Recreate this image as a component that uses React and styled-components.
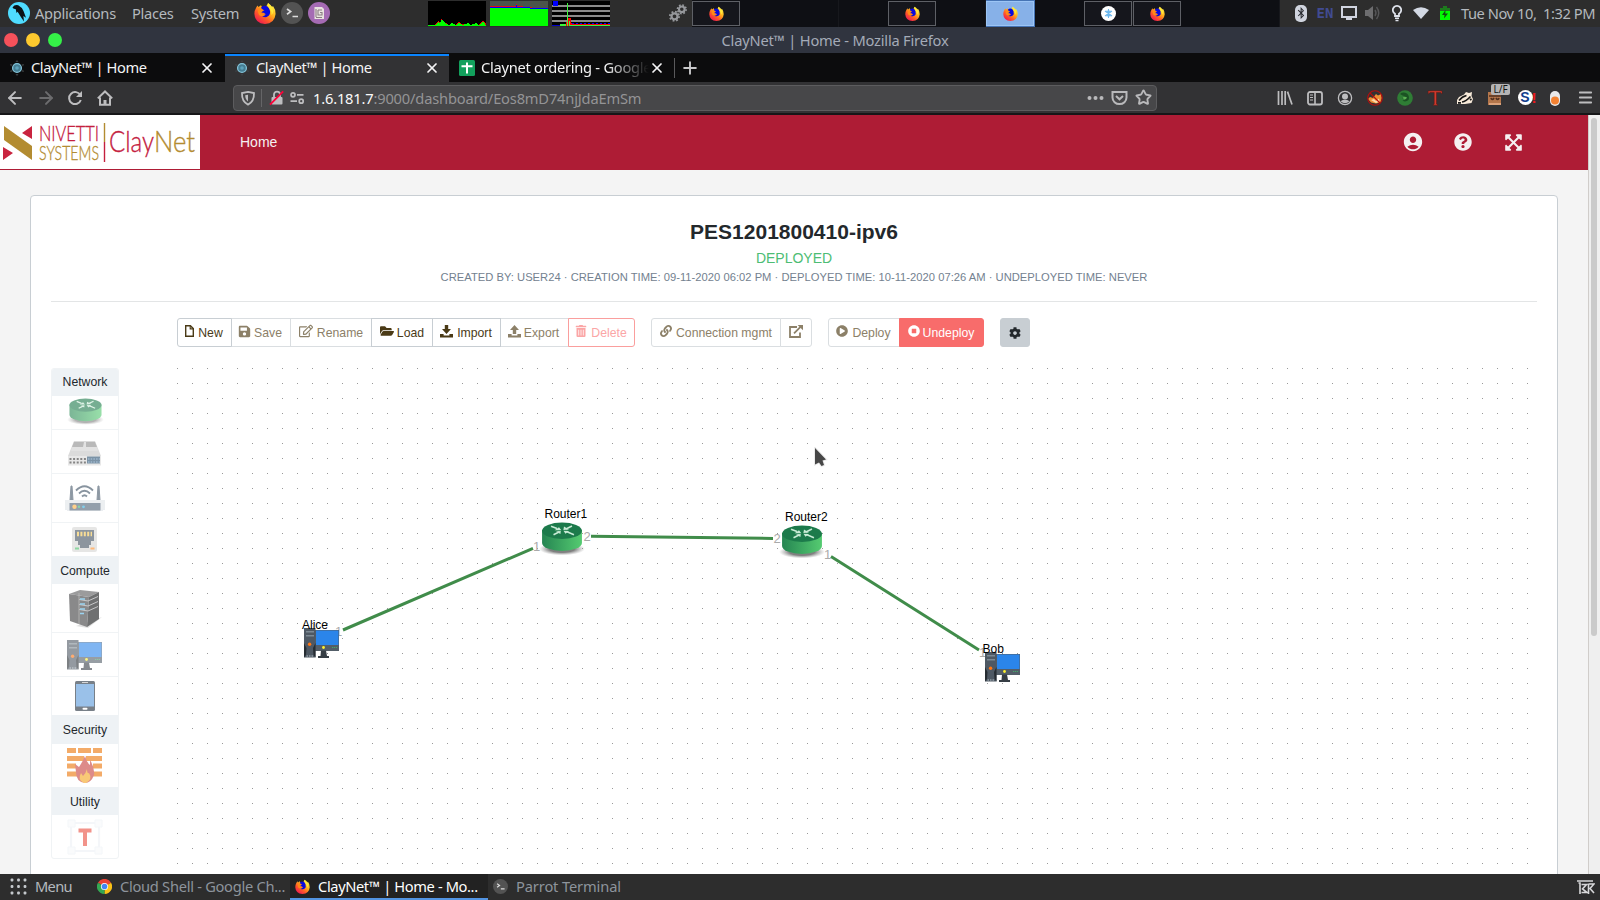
import React from "react";
import styled, { createGlobalStyle, css } from "styled-components";
import {
  FaSave, FaRegEdit, FaFolderOpen, FaLink, FaPlayCircle, FaStopCircle,
  FaCog, FaQuestionCircle, FaExpandArrowsAlt, FaBluetoothB, FaTrashAlt,
} from "react-icons/fa";
import { MdAccountCircle } from "react-icons/md";
import { ArrowLeft, ArrowRight, Star, X, Plus, Menu as MenuIcon } from "lucide-react";

const Global = createGlobalStyle`
  * { box-sizing: border-box; }
  html, body { margin: 0; height: 900px; overflow: hidden; }
  body { font-family: "Liberation Sans", Arial, sans-serif; }
  svg { display: block; flex: none; }
`;

const Desktop = styled.div`
  width: 1600px; height: 900px; display: flex; flex-direction: column; overflow: hidden;
  background: #2d2d2d;
`;
const uiFont = css`
  font-family: "Noto Sans", sans-serif; font-size: 14.67px; letter-spacing: -0.28px; white-space: pre;
`;

/* ---------- desktop panel ---------- */
const Panel = styled.div`
  ${uiFont} height: 27px; flex: none; display: flex; align-items: center; color: #b4b9be; background: #2d2d2d;
`;
const Cell = styled.div`
  width: ${(p) => p.$w}px; height: 100%; flex: none; display: flex; align-items: center;
  justify-content: ${(p) => (p.$center ? "center" : "flex-start")};
  padding: 0 0 1px ${(p) => p.$pad || 0}px;
`;
const Graphs = styled.div`display: flex; gap: 4px; width: 241px;`;
const Workspaces = styled.div`display: flex; width: 588px; height: 27px; background: #0e0f14;`;
const WorkCell = styled.div`
  width: 49px; height: 27px; padding: 1px 1px 1px 0; border-right: ${(p) => (p.$edge ? "1px solid #17181d" : "0")};
  background: ${(p) => (p.$active ? "#4674b5" : "transparent")};
`;
const WorkWindow = styled.div`
  width: 48px; height: 25px; display: flex; align-items: center; justify-content: center; padding-bottom: 1px;
  border: 1px solid ${(p) => (p.$active ? "#9cc5f5" : "#5e6066")};
  background: ${(p) => (p.$active ? "#87b1e8" : "#15161c")};
`;
const Lang = styled.span`
  font-family: "DejaVu Sans Mono", monospace; font-size: 14px; font-weight: bold; color: #414b92; letter-spacing: 0;
`;
const Clock = styled.span`letter-spacing: -0.44px; padding: 0 0 2px 4px;`;

/* ---------- window frame ---------- */
const TitleBar = styled.div`
  ${uiFont} height: 26px; flex: none; display: grid; grid-template-columns: 70px 1fr; align-items: center;
  background: #30343f; color: #a4abb8; letter-spacing: -0.2px;
`;
const Lights = styled.div`display: flex; gap: 8px; padding-left: 4px;`;
const Light = styled.i`width: 14px; height: 14px; border-radius: 50%; background: ${(p) => p.$c};`;
const TitleText = styled.div`text-align: center;`;

const TabStrip = styled.div`
  ${uiFont} height: 29px; flex: none; display: flex; background: #0c0c0d; color: #f4f4f5; letter-spacing: -0.44px;
`;
const Tab = styled.div`
  width: ${(p) => p.$w}px; height: 29px; display: flex; align-items: center;
  padding: 1px ${(p) => p.$right || 9}px 0 ${(p) => p.$left || 9}px;
  background: ${(p) => (p.$active ? "#323234" : "transparent")};
  box-shadow: ${(p) => (p.$active ? "inset 0 1px 0 #0c0c0d, inset 0 3px 0 #0a84ff" : "none")};
`;
const TabLabel = styled.span`
  flex: 1; margin-left: 6px; overflow: hidden; white-space: nowrap; padding-bottom: 2px;
  ${(p) => p.$fade && css`letter-spacing: -0.26px; mask-image: linear-gradient(90deg, #000 75%, transparent 100%);`}
`;
const NewTab = styled.div`
  display: flex; align-items: center; padding-left: 5px; margin: 5px 0 4px; border-left: 1px solid #5a5a5c; color: #c8c8ca;
`;

const NavBar = styled.div`
  height: 33px; flex: none; display: flex; align-items: center; background: #323234; color: #bdbdbf;
  border-bottom: 2px solid #161618;
`;
const NavButtons = styled.div`
  display: flex; align-items: center; gap: 11px; width: 233px; padding-left: 5px;
  svg:last-child { margin-left: 3px; }
`;
const UrlBar = styled.div`
  ${uiFont} width: 924px; height: 26px; display: flex; align-items: center; background: #474749; border: 1px solid #5c5c5e;
  border-radius: 4px; padding: 0 4px 0 6px; color: #fafafa;
`;
const UrlDivider = styled.i`width: 1px; height: 18px; background: #656567; margin: 0 7px 0 5px;`;
const UrlText = styled.span`
  flex: 1; margin-left: 8px; letter-spacing: -0.18px; span { color: #949496; }
`;
const UrlActions = styled.div`display: flex; gap: 7px; align-items: center; color: #b9b9bb;`;
const Extensions = styled.div`display: flex; margin-left: 113px;`;
const Extension = styled.div`
  width: 30px; height: 28px; display: flex; align-items: center; justify-content: center; position: relative;
`;
const ExtBadge = styled.span`
  position: absolute; left: 11px; top: 0; height: 11px; width: 19px; border-radius: 2px; text-align: center;
  font: 10px/11px "Noto Sans", sans-serif; background: #b5b5b5; color: #161616;
`;

/* ---------- web page ---------- */
const Viewport = styled.div`height: 759px; flex: none; display: flex; overflow: hidden; background: #f4f4f4;`;
const Page = styled.div`width: 1588px; display: flex; flex-direction: column; flex: none;`;
const Scrollbar = styled.div`width: 12px; border-left: 1px solid #d0cdca; background: #efefef; padding: 3px 3px 0 2px;`;
const Thumb = styled.div`height: 518px; width: 6px; border-radius: 3px; background: #cacaca;`;
const AppBar = styled.header`
  height: 55px; flex: none; display: flex; align-items: center; background: #ae1c35; color: #f5f0f1;
`;
const Brand = styled.div`width: 200px; height: 55px; border-bottom: 1px solid #ae1c35; background: #fff;`;
const HomeLink = styled.a`font-size: 14px; margin-left: 40px; padding-bottom: 1px; flex: 1;`;
const AppActions = styled.div`
  display: grid; grid-template-columns: repeat(3, 50px); justify-items: center; align-items: center;
  margin-right: 50px; padding-bottom: 1px;
`;
const Card = styled.main`
  width: 1528px; height: 720px; margin: 25px 0 0 30px; border: 1px solid #c8ced3; border-radius: 4px;
  background: #fff; padding: 0 20px; flex: none;
`;
const Heading = styled.div`
  height: 106px; padding-top: 23px; display: flex; flex-direction: column; align-items: center;
  border-bottom: 1px solid #e3e5e6;
`;
const Title = styled.h4`margin: 0; font-size: 21px; line-height: 25px; color: #23282c;`;
const Status = styled.div`margin-top: 6px; font-size: 14px; line-height: 16px; color: #4dbd74;`;
const Meta = styled.div`margin-top: 5px; font-size: 11.2px; line-height: 13px; letter-spacing: 0.017px; color: #73818f;`;

const Toolbar = styled.div`display: flex; gap: 16px; margin: 16px 0 0 126px; height: 29px;`;
const Group = styled.div`
  display: flex;
  & > *:first-child { border-radius: 3px 0 0 3px; }
  & > *:last-child { border-radius: 0 3px 3px 0; }
  & > *:only-child { border-radius: 3px; }
`;
const tones = {
  plain: css`border-color: #c8ced3; color: #4a3a16; background: #fff; z-index: 1;`,
  muted: css`border-color: #dadee1; color: #8c8068; background: #fff;`,
  danger: css`border-color: #fa9e9d; color: #fba6a6; background: #fff; z-index: 1;`,
  stop: css`border-color: #f86c6b; color: #fff; background: #f86c6b; z-index: 1;`,
  gear: css`border-color: #c8ced3; color: #23282c; background: #c8ced3;`,
};
const ToolButton = styled.button`
  width: ${(p) => p.$w}px; height: 29px; display: flex; align-items: center; justify-content: center;
  gap: ${(p) => p.$gap ?? 4}px;
  border: 1px solid; padding: 0 ${(p) => p.$shift || 0}px 0 0; margin-left: -1px; position: relative; white-space: nowrap;
  font: 12.25px "Liberation Sans", Arial, sans-serif; ${(p) => tones[p.$tone]}
  &:first-child { margin-left: 0; }
  svg { margin-top: ${(p) => (p.$tone === "gear" ? 1 : -3)}px; }
`;

const Work = styled.div`display: flex; margin-top: 21px;`;
const Palette = styled.aside`
  width: 68px; height: 491px; margin-right: 58px; border: 1px solid #f0f3f5; border-radius: 3px; flex: none;
  display: flex; flex-direction: column; overflow: hidden;
`;
const PaletteHead = styled.div`
  height: ${(p) => p.$h}px; display: flex; align-items: center; justify-content: center; flex: none;
  padding: ${(p) => p.$down || 0}px 0 ${(p) => p.$up || 0}px;
  font-size: 12.25px; color: #23282c; background: #eef2f5;
`;
const PaletteItem = styled.div`
  height: ${(p) => p.$h}px; flex: none; display: flex; align-items: center; justify-content: center;
  border-bottom: ${(p) => (p.$line ? "1px solid #f0f3f5" : "0")};
  padding: ${(p) => p.$down || 0}px ${(p) => p.$left ?? 1}px ${(p) => p.$up || 0}px 0;
  svg { opacity: 0.6; }
`;
const Canvas = styled.section`
  position: relative; width: 1353px; height: 510px;
  background: conic-gradient(from 270deg at 1px 1px, #999 90deg, transparent 0) 0 0 / 15px 15px;
`;
const Links = styled.svg`position: absolute; left: 0; top: 0;`;
const Node = styled.div`position: absolute; left: ${(p) => p.$x}px; top: ${(p) => p.$y}px;`;
const NodeName = styled.span`
  position: absolute; left: ${(p) => p.$x}px; top: ${(p) => p.$y}px; font-size: 12px; line-height: 14px; color: #000;
`;
const Port = styled.span`
  position: absolute; left: ${(p) => p.$x}px; top: ${(p) => p.$y}px; font-size: 13px; line-height: 14px; color: #aaa;
`;

/* ---------- task bar ---------- */
const TaskBar = styled.div`${uiFont} height: 26px; flex: none; display: flex; background: #2d2d2d; color: #8d949c;`;
const Task = styled.div`
  width: ${(p) => p.$w}px; padding: 0 0 1px ${(p) => p.$pad}px; display: flex; align-items: center; gap: 8px;
  letter-spacing: ${(p) => p.$track ?? -0.28}px;
  color: ${(p) => (p.$active ? "#fff" : p.$menu ? "#b4b9be" : "#8d949c")};
  background: ${(p) => (p.$active ? "#222" : "transparent")};
  box-shadow: ${(p) => (p.$active ? "inset 0 -2px 0 #5294e2" : "none")};
`;
const TaskLabel = styled.span`padding-bottom: 2px;`;
const Push = styled.div`margin-left: auto; padding: 6px 5px 0 0;`;

/* ---------- drawings ---------- */
const Firefox = ({ size }) => (
  <svg width={size} height={size} viewBox="0 0 22 22">
    <defs>
      <linearGradient id="fx" x1="0.85" y1="0.05" x2="0.2" y2="0.9">
        <stop offset="0" stopColor="#fff44a" /><stop offset="0.4" stopColor="#ffb01c" />
        <stop offset="0.7" stopColor="#ff5a28" /><stop offset="1" stopColor="#f0204e" />
      </linearGradient>
    </defs>
    <path d="M2 6 L3.4 3.4 L4.4 5 L7 3.2 L8.5 6 L12 5 L14 1 Q17 3 18 5 L19 4 Q22 8 21.6 12 Q20.6 21.6 11 22 Q1 21.4 .4 12 Q.3 8.6 2 6Z" fill="url(#fx)" />
    <path d="M7 5.5 Q10 2.5 13.5 4.5 Q17 8 15.8 12 Q13.5 16.5 8.6 14.6 L7.4 12.8 Q10 13.6 11.6 12 L9.5 10.8 L7 10.4 Q8.5 9 10.5 8 L8 7.8Z" fill="#0a0adc" />
    <path d="M4.6 6.2 Q8 6 9.6 8.2 L7.2 10.4 Q8 13 12 12.2 Q9 15.8 5 13 Q3.3 9.6 4.6 6.2Z" fill="#ff8a16" />
    <path d="M14 1 Q13.2 4 15.5 6.5 Q18 9.5 17.5 13 Q20.5 10 18 5Z" fill="#ffe93a" />
  </svg>
);
const Parrot = () => (
  <svg width="22" height="22" viewBox="0 0 22 22">
    <circle cx="11" cy="11" r="11" fill="#4fdcff" />
    <path d="M4.5 5.5 Q6.5 2.3 10.2 3.3 Q14 5.3 15.5 9 L18 15.8 L15.4 14 L16 19.5 L13.2 15.5 L9.6 9.8 L8.5 11 L7.8 7.2 L5.4 6.4Z" fill="#0b1216" />
  </svg>
);
const Terminal = ({ size }) => (
  <svg width={size} height={size} viewBox="0 0 22 22">
    <circle cx="11" cy="11" r="11" fill="#535353" />
    <path d="M6 7 L9.6 9.6 L6 12.2 M11.5 14.5 H17" fill="none" stroke="#ddd" strokeWidth="1.7" />
  </svg>
);
const Notes = () => (
  <svg width="22" height="22" viewBox="0 0 22 22">
    <circle cx="11" cy="11" r="11" fill="#a56bb4" />
    <path d="M6.5 5H14L16 7V17H6.5Z" fill="#e9e3e0" />
    <path d="M8 7V15M10 8H14M10 8V13H14V10.5H12M8 15.5H14" stroke="#8b7d84" strokeWidth="1.1" fill="none" />
  </svg>
);
const Gears = () => (
  <svg width="18" height="18" viewBox="0 0 18 18" fill="none" stroke="#96989c">
    <circle cx="5.5" cy="12.3" r="3" strokeWidth="2.2" /><circle cx="5.5" cy="12.3" r="4.6" strokeWidth="1.8" strokeDasharray="1.8 1.81" />
    <circle cx="12.8" cy="5.3" r="2.8" strokeWidth="2.1" /><circle cx="12.8" cy="5.3" r="4.3" strokeWidth="1.7" strokeDasharray="1.7 1.67" />
  </svg>
);
const CpuGraph = () => (
  <svg width="58" height="25" viewBox="0 0 58 25" shapeRendering="crispEdges">
    <rect width="58" height="25" fill="#000" />
    <path d="M7 25V23L10 20 12 22 14 17 15 21 18 22 21 24 24 22 27 24 31 21 34 23 37 24 40 22 43 24 48 22 51 24 54 20 56 20 58 23V25Z" fill="#e00" />
    <path d="M0 25V24H7L10 21 12 22 14 18 16 21 19 23 21 24 24 22 28 24 31 22 35 24 40 22 43 24 48 22 51 24 54 21 57 22 58 25Z" fill="#0f0" />
  </svg>
);
const MemGraph = () => (
  <svg width="58" height="25" viewBox="0 0 58 25" shapeRendering="crispEdges">
    <rect width="58" height="25" fill="#4b544c" />
    <path d="M0 5H26V3H27V5L38 6H42V7H58V10H0Z" fill="#e01010" />
    <path d="M0 6H26V4H27V6H40V7H58V10H0Z" fill="#00f" />
    <path d="M0 7H24L40 7.5 48 8H58V25H0Z" fill="#0f0" />
  </svg>
);
const NetGraph = () => (
  <svg width="58" height="25" viewBox="0 0 58 25" shapeRendering="crispEdges">
    <rect width="58" height="25" fill="#000" />
    <path d="M0 5H58M0 10H58M0 15H58M0 20H58" stroke="#8b8b8b" strokeWidth="2" />
    <path d="M8 25V23H14L16 17H19V22L22 23H58V25Z" fill="#f00" />
    <path d="M20 22.5H58" stroke="#00f" strokeDasharray="2 2" />
    <path d="M8 25V23H14V25M15 25V2H16V25M17 25V20H18V24H58V25Z" fill="#3df53d" />
    <rect x="1" width="5" height="5" fill="#00f" /><rect y="24" width="8" height="1" fill="#00c" />
  </svg>
);
const Snow = () => (
  <svg width="15" height="15" viewBox="0 0 15 15">
    <circle cx="7.5" cy="7.5" r="7.5" fill="#fff" />
    <path d="M7.5 3V12M4 5L11 10M4 10L11 5M5.8 4.5L9.2 10.6M9.2 4.5L5.8 10.6" stroke="#6cb8ee" strokeWidth="1.1" />
  </svg>
);
const Tray = ({ kind }) => (
  <svg width="18" height="18" viewBox="0 0 18 18">
    {kind === "screen" && <><rect x="2" y="3" width="14" height="10" fill="none" stroke="#d0d4e0" strokeWidth="2" /><path d="M6 16H12V13H6Z" fill="#d0d4e0" /></>}
    {kind === "sound" && <><path d="M1 6H4L9 2V16L4 12H1Z" fill="#6d6d6f" /><path d="M11 6Q13 9 11 12M12.5 3Q17 9 12.5 15" fill="none" stroke="#565658" strokeWidth="1.4" /></>}
    {kind === "bulb" && <><path d="M7 12V9.8A4.2 4.2 0 1 1 11 9.8V12Z" fill="none" stroke="#dfe3ec" strokeWidth="1.8" /><path d="M7 14.2H11M7.5 16.6H10.5" stroke="#dfe3ec" strokeWidth="1.5" /></>}
    {kind === "wifi" && <path d="M1 6Q9 .5 17 6L9 15Z" fill="#d3d9e4" />}
    {kind === "power" && <><path d="M4 4H7V2H11V4H14V8H4Z" fill="#1d7a1d" /><rect x="4" y="7" width="10" height="9" fill="#0f0" /><path d="M9.5 6L6 11H8.5L8 14.5L12 9.5H9.3Z" fill="#134d13" /></>}
  </svg>
);
const Bluetooth = styled.div`
  width: 12px; height: 17px; border-radius: 5px; background: #d0d4de; color: #26282d;
  display: flex; align-items: center; justify-content: center;
`;
const Favicon = () => (
  <svg width="16" height="16" viewBox="0 0 16 16">
    <path d="M8 0L9.5 2H6.5ZM8 16L9.5 14H6.5ZM1 4L3.5 4.5 2 6.5ZM15 4L12.5 4.5 14 6.5ZM1 12L3.5 11.5 2 9.5ZM15 12L12.5 11.5 14 9.5Z" fill="#3d4042" />
    <circle cx="8" cy="8" r="4.4" fill="#457d92" stroke="#83c3d8" strokeWidth="1.3" /><circle cx="8" cy="8" r="1.8" fill="#5da3bb" />
  </svg>
);
const Sheets = () => (
  <svg width="16" height="16" viewBox="0 0 16 16">
    <rect width="16" height="16" rx="1.5" fill="#12a05c" /><path d="M2.5 6.2H13.5M8 2.5V13.5" stroke="#fff" strokeWidth="2" />
  </svg>
);
const Reload = () => (
  <svg width="16" height="16" viewBox="0 0 16 16" fill="none" stroke="currentColor" strokeWidth="2">
    <path d="M13.4 5.2A6 6 0 1 0 13.8 10" /><path d="M15 1V7H9Z" fill="currentColor" stroke="none" />
  </svg>
);
const House = () => (
  <svg width="16" height="16" viewBox="0 0 16 16" fill="none" stroke="currentColor" strokeWidth="2">
    <path d="M.8 8.4L8 1.5L15.2 8.4M3 7.5V14.8H13V7.5" /><path d="M8 14V10" strokeWidth="3" />
  </svg>
);
const Shield = () => (
  <svg width="16" height="16" viewBox="0 0 16 16">
    <path d="M8 1.8L14 3Q14.3 11.5 8 14.6Q1.7 11.5 2 3Z" fill="none" stroke="#bdbdbf" strokeWidth="1.8" />
    <path d="M8 4.8L5.2 5.3Q5.2 9.4 8 11.5Z" fill="#bdbdbf" />
  </svg>
);
const Lock = () => (
  <svg width="16" height="16" viewBox="0 0 16 16">
    <rect x="2.5" y="7" width="11" height="7.5" rx="1" fill="#bdbdbf" />
    <path d="M5 7V4.6A3 3 0 0 1 11 4.6V7" fill="none" stroke="#bdbdbf" strokeWidth="1.8" />
    <path d="M1 14.6L14.2 1.4" stroke="#ff0039" strokeWidth="1.8" />
  </svg>
);
const PermissionsIcon = styled.svg`margin-left: 4px;`;
const Permissions = () => (
  <PermissionsIcon width="16" height="16" viewBox="0 0 16 16" fill="none" stroke="#bdbdbf" strokeWidth="1.7">
    <circle cx="4" cy="4.8" r="2" /><path d="M8 4.8H14.5M1.5 11.2H8" /><circle cx="12.2" cy="11.2" r="2" />
  </PermissionsIcon>
);
const Pocket = () => (
  <svg width="17" height="16" viewBox="0 0 17 16" fill="none" stroke="currentColor" strokeWidth="2">
    <path d="M1.5 2H15.5V7.5A7 6.6 0 0 1 1.5 7.5Z" /><path d="M5 6L8.5 9.3L12 6" />
  </svg>
);
const Dots = () => (
  <svg width="17" height="16" viewBox="0 0 17 16" fill="currentColor">
    <circle cx="2.5" cy="8" r="2" /><circle cx="8.5" cy="8" r="2" /><circle cx="14.5" cy="8" r="2" />
  </svg>
);
const Ext = ({ kind }) => (
  <svg width="16" height="16" viewBox="0 0 16 16">
    {kind === "library" && <path d="M1.5 1V15M5 1V15M8.2 1V15M10.5 1.6L15 14.5" stroke="#bdbdbf" strokeWidth="1.7" />}
    {kind === "sidebar" && <g fill="none" stroke="#bdbdbf"><rect x="1" y="2" width="14" height="12.5" rx="2" strokeWidth="1.8" /><path d="M8 2V14" strokeWidth="1.6" /><path d="M3 5H6M3 7.5H6M3 10H6" /></g>}
    {kind === "account" && <><circle cx="8" cy="8" r="6.6" fill="none" stroke="#bdbdbf" strokeWidth="1.3" /><circle cx="8" cy="6.6" r="3" fill="#bdbdbf" /><path d="M3.5 11.2Q8 8.5 12.5 11.2Q8 15.5 3.5 11.2Z" fill="#bdbdbf" /></>}
    {kind === "fox" && <><path d="M1 9L3 7L6 8L9 4L11 5.5L14 4L14.8 8L13.5 12.5L9 13.5L4 12.5Z" fill="#ef8f35" /><path d="M4 10L7 9L9 11L12 8.5L12.5 11.5L9 13Z" fill="#fbdcae" /><circle cx="8" cy="8" r="7.3" fill="none" stroke="#b80d0d" strokeWidth="1.1" /><path d="M3 3L13 13" stroke="#b80d0d" strokeWidth="1.1" /></>}
    {kind === "green" && <><circle cx="8" cy="8" r="7.8" fill="#2f7d35" /><path d="M3 4Q6 1.5 10 3.5Q13 6.5 11.5 10Q8.5 12.6 5.5 10.6L7.8 9.8L5.2 8L8 6.2L5.6 5.6Z" fill="#1b5223" /><path d="M5.6 7.6Q8 6 10 7.5Q9 10 7 9.4Z" fill="#5aae52" /></>}
    {kind === "tee" && <path d="M1 1Q8 .3 15 1L15 4L13.5 2.5H9.5V14L11 15.2H6L7.2 14V2.5H3L1.4 4Z" fill="#d23a2c" stroke="#5a1712" strokeWidth=".5" />}
    {kind === "badger" && <><path d="M0 10L2 7L7 4.5L9 2L12 3L15 2L14.5 6L16 9L14.5 13L8 14L0 14Z" fill="#f7ead9" /><path d="M2 10.5Q5 6.5 9.5 5.5M5 12Q9 11.5 13.5 6.5M13 10L14.5 9M1 12.8H4" stroke="#171717" strokeWidth="1.7" fill="none" /></>}
    {kind === "box" && <><rect x="1" y="2" width="13" height="13" fill="#b4764b" /><path d="M2 6H14M4 8Q5 11 7 8M9 8Q11 11 12 8" stroke="#50311f" strokeWidth="1.7" fill="none" /><path d="M2 14H14" stroke="#dba27b" strokeWidth="2" /></>}
    {kind === "capsule" && <><rect x="3" y="1" width="10" height="15" rx="5" fill="#e9e9ea" /><circle cx="8" cy="10.5" r="4" fill="#f38131" /></>}
  </svg>
);
const SearchExt = styled.div`
  width: 15px; height: 15px; border-radius: 50%; background: #fff; text-align: center; color: #123e8c;
  font: 900 14px/15px "Liberation Sans", sans-serif; position: relative;
  &::after { content: "!"; position: absolute; right: -4px; top: 0; color: #f01818; font-size: 15px; }
`;

const NivettiLogo = () => (
  <svg width="200" height="54" viewBox="0 0 200 54">
    <path d="M4 11L32 31V45L4 25Z" fill="#b38c31" />
    <path d="M32 11V24L22 18ZM3 32V45L13 38Z" fill="#c9243f" />
    <g fontFamily="Lato, sans-serif" fontWeight="300" strokeWidth="0.35">
      <text x="39" y="26" fontSize="22" fill="#c4203e" stroke="#c4203e" textLength="60" lengthAdjust="spacingAndGlyphs">NIVETTI</text>
      <text x="39" y="44.5" fontSize="19.5" fill="#b38c31" stroke="#b38c31" textLength="60" lengthAdjust="spacingAndGlyphs">SYSTEMS</text>
      <text x="109" y="36.5" fontSize="29" fill="#c4203e" stroke="#c4203e" textLength="45" lengthAdjust="spacingAndGlyphs">Clay</text>
      <text x="154" y="36.5" fontSize="29" fill="#b38c31" stroke="#b38c31" textLength="41" lengthAdjust="spacingAndGlyphs">Net</text>
    </g>
    <path d="M104.5 8V27" stroke="#b38c31" strokeWidth="1.4" /><path d="M104.5 27V47" stroke="#c4203e" strokeWidth="1.4" />
  </svg>
);

const Router = ({ w }) => (
  <svg width={w} height={w * 0.78} viewBox="0 0 46 36">
    <defs>
      <linearGradient id="rt"><stop offset="0" stopColor="#258552" /><stop offset="1" stopColor="#55cb71" /></linearGradient>
      <radialGradient id="sh"><stop offset=".55" stopColor="#555" stopOpacity=".75" /><stop offset="1" stopColor="#888" stopOpacity="0" /></radialGradient>
    </defs>
    <ellipse cx="23" cy="27" rx="23" ry="6.5" fill="url(#sh)" />
    <path d="M3 8V21A20 8 0 0 0 43 21V8Z" fill="url(#rt)" />
    <ellipse cx="23" cy="8.8" rx="20" ry="8.2" fill="#1c7a4b" />
    <path d="M12 4.3L18 6.6M33 4L27 7M14.5 12.8L20.5 9.8M35 12.8L27.5 9.6" stroke="#c9ebd6" strokeWidth="1.6" />
    <path d="M22.4 8.2L15.6 8.2L20 5.2ZM24.4 8L25 4.6L30 7.6ZM21.8 9L21.4 12L17 9.6ZM24.5 8.8L30 9L26.5 11.8Z" fill="#c9ebd6" />
  </svg>
);
const Computer = ({ w }) => (
  <svg width={w} height={(w * 30) / 35} viewBox="0 0 35 30">
    <path d="M11 2H35V23H11Z" fill="#535e68" /><path d="M12 2.5H34.5V17H12Z" fill="#2b85ea" />
    <path d="M17 22.5H22L23 28H25V30H14V28H16.5Z" fill="#363e45" />
    <rect width="11.5" height="29.5" fill="#4e5863" />
    <path d="M2 3.8H10M2 7.8H10" stroke="#7c8994" strokeWidth="1.6" />
    <path d="M0 15L2.5 20L2 27L0 29.5ZM11.5 15L9 20L9.5 27L11.5 29.5Z" fill="#262c32" />
    <circle cx="5.6" cy="16.3" r="1.7" fill="#ff7614" /><path d="M2.5 28H9" stroke="#b2bdc5" strokeDasharray="1.5 1" />
    <circle cx="19.5" cy="19.5" r="1.4" fill="#fff22d" /><path d="M28 19.5H33" stroke="#46a56a" strokeDasharray="1.3 .7" />
  </svg>
);
const Switch = () => (
  <svg width="33" height="25" viewBox="0 0 33 25">
    <path d="M6 0H27L33 15V24H0V15Z" fill="#c4c4c4" /><path d="M6 1H27L30 10H3Z" fill="#cfcfcf" />
    <path d="M6 1H16L15 6H4ZM18 1H27L29 6H18Z" fill="#8c8c8c" /><rect y="15" width="33" height="9.5" fill="#dadada" />
    <path d="M1.5 18H18M1.5 21.5H18" stroke="#333" strokeWidth="2" strokeDasharray="2 1.6" />
    <rect x="19" y="15.5" width="13" height="7" fill="#264c6c" /><path d="M20 18H32M20 21H32" stroke="#7faad0" strokeDasharray="1.5 1.2" />
  </svg>
);
const Wifi = () => (
  <svg width="40" height="26" viewBox="0 0 40 26">
    <path d="M5 15L6 1H7L8 15ZM32 15L33 1H34L35 15Z" fill="#425466" stroke="#425466" />
    <path d="M11 5.5Q19.5-3 28 5.5M14 8.5Q19.5 3 25 8.5M17 11.5Q19.5 9 22 11.5" fill="none" stroke="#394d60" strokeWidth="1.8" />
    <path d="M0 15H40V25H38V26H2V25H0Z" fill="#dfe4e8" /><rect x="4.5" y="18" width="31" height="7.5" fill="#4c5f73" />
    <circle cx="9.5" cy="21.8" r="2.2" fill="#ffb13d" /><circle cx="14" cy="21.8" r="1.2" fill="#37bd72" /><circle cx="18.5" cy="21.8" r="1.4" fill="#2db0e2" />
  </svg>
);
const Ethernet = () => (
  <svg width="25" height="25" viewBox="0 0 25 25">
    <rect width="25" height="25" rx="2" fill="#d6d6d4" /><path d="M3 3H22V14H19V18H17V21H8V18H6V14H3Z" fill="#41505f" />
    <path d="M5 7H20" stroke="#f5c750" strokeWidth="4.5" strokeDasharray="2 1.4" />
    <path d="M3 21.5H7" stroke="#43be63" strokeWidth="2" /><path d="M18.5 21.5H22.5" stroke="#ff8a1f" strokeWidth="2" />
  </svg>
);
const Server = () => (
  <svg width="34" height="38" viewBox="0 0 34 38">
    <path d="M8 36L34 27L20 38Z" fill="#ccc" /><path d="M1 4L12 0L31 2L21 7Z" fill="#5a5a5c" /><path d="M1 4L21 7L19 37L2 31Z" fill="#3c3c3e" />
    <path d="M21 7L31 2V29L19 37Z" fill="#101214" />
    <path d="M11 9.5L20 11L30 6.5M11 14.5L20 16L30 11.5M11 19.5L20 21L30 16.5" stroke="#a3a3a6" strokeWidth="1" fill="none" />
    <path d="M12 9H17M12 14H17M12 19H17M12 23.5H16" stroke="#58b7e8" strokeWidth="1.6" /><path d="M11 3V34" stroke="#8a8a8a" strokeWidth=".8" />
  </svg>
);
const Phone = () => (
  <svg width="20" height="30" viewBox="0 0 20 30">
    <rect width="20" height="30" rx="1.5" fill="#202c3a" /><rect x="1" y="3" width="18" height="22.5" fill="#5898dc" />
    <path d="M7 1.5H13" stroke="#bbb" /><rect x="7.5" y="26.7" width="5" height="2" rx="1" fill="#fff" />
  </svg>
);
const Firewall = () => (
  <svg width="35" height="35" viewBox="0 0 35 35">
    <g fill="#ec7404"><path d="M0 0H9V5H0ZM11 0H24V5H11ZM26 0H35V5H26ZM0 8H17V13H0ZM19 8H35V13H19ZM0 15.5H9V20.5H0ZM26 15.5H35V20.5H26ZM0 23.5H12V28.5H0ZM25 23.5H35V28.5H25Z" /></g>
    <path d="M18 8Q20 15 23 17Q23 14 23 12Q28 20 27 27Q24 35 18 35Q9 34 9 24L8 16L12 19Q16 13 18 8Z" fill="#c83f3b" />
    <path d="M20 21Q20 26 22 25Q26 31 19 35H17Q10 32 14 25L16 28Q19 25 20 21Z" fill="#f4a51c" />
  </svg>
);
const TextTool = () => (
  <svg width="36" height="36" viewBox="0 0 36 36">
    <path d="M6 4H30M6 32H30M4 6V30M32 6V30" stroke="#edf1f6" strokeWidth="2.2" />
    <path d="M1 1H8V8H1ZM28 1H35V8H28ZM1 28H8V35H1ZM28 28H35V35H28Z" fill="#f7f9fb" stroke="#edf1f6" />
    <path d="M11.5 9.5H24.5V13.5H20V27H16V13.5H11.5Z" fill="#ea4b3d" />
  </svg>
);
const Page12 = () => (
  <svg width="9" height="12" viewBox="0 0 9 12" fill="none" stroke="currentColor" strokeWidth="1.4">
    <path d="M.7.7H5.4L8.3 3.6V11.3H.7Z" /><path d="M5.2.7V3.9H8.3" strokeWidth="1.1" />
  </svg>
);
const Transfer = ({ up }) => (
  <svg width="13" height="13" viewBox="0 0 13 13" fill="currentColor">
    <path d={up ? "M6.5 0L11 5H8.2V9H4.8V5H2Z" : "M4.8 0H8.2V4H11L6.5 9L2 4H4.8Z"} />
    <path d="M0 9H3.6V10.6H9.4V9H13V12.6H0Z" />
  </svg>
);
const External = () => (
  <svg width="14" height="13" viewBox="0 0 14 13" fill="none" stroke="currentColor" strokeWidth="1.8">
    <path d="M8 2H1V12H11V7.5" /><path d="M5 8.3L11.5 1.8" /><path d="M8.6 0H14V5.3Z" fill="currentColor" stroke="none" />
  </svg>
);
const Chrome = () => (
  <svg width="15" height="15" viewBox="0 0 16 16">
    <path d="M8 8L1 4A8 8 0 0 1 15 4Z" fill="#ea4335" /><path d="M8 8L15 4A8 8 0 0 1 8 16Z" fill="#fbc116" />
    <path d="M8 8V16A8 8 0 0 1 1 4Z" fill="#34a853" /><circle cx="8" cy="8" r="3.8" fill="#fff" /><circle cx="8" cy="8" r="3" fill="#4285f4" />
  </svg>
);
const MenuDots = () => (
  <svg width="17" height="17" viewBox="0 0 17 17" fill="#c4c8cc">
    {[2, 8.5, 15].map((y) => [2, 8.5, 15].map((x) => <rect key={x + "-" + y} x={x - 1.4} y={y - 1.4} width="2.8" height="2.8" rx="1" />))}
  </svg>
);
const Pager = () => (
  <svg width="18" height="15" viewBox="0 0 18 15" fill="none" stroke="#d7d7d9" strokeWidth="1.6">
    <path d="M0 1H16M1.5 3H3V14M4.5 4.5H9.5L5.5 9L10 12.5H4.5M11.5 3.5V14M12 4H17L13 8.5L17 13" />
  </svg>
);

const workspaceWindows = { 0: "fx", 4: "fx", 6: "fx", 8: "snow", 9: "fx" };

export default function App() {
  return (
    <Desktop>
      <Global />
      <Panel>
        <Cell $w={35} $pad={8}><Parrot /></Cell>
        <Cell $w={97}>Applications</Cell>
        <Cell $w={59}>Places</Cell>
        <Cell $w={63}>System</Cell>
        <Cell $w={27}><Firefox size={22} /></Cell>
        <Cell $w={27}><Terminal size={22} /></Cell>
        <Cell $w={120}><Notes /></Cell>
        <Graphs><CpuGraph /><MemGraph /><NetGraph /></Graphs>
        <Cell $w={23}><Gears /></Cell>
        <Workspaces>
          {Array.from({ length: 12 }, (_, i) => (
            <WorkCell key={i} $active={i === 6} $edge={i % 3 === 2}>
              {workspaceWindows[i] && (
                <WorkWindow $active={i === 6}>
                  {workspaceWindows[i] === "fx" ? <Firefox size={15} /> : <Snow />}
                </WorkWindow>
              )}
            </WorkCell>
          ))}
        </Workspaces>
        <Cell $w={9} />
        <Cell $w={24} $center><Bluetooth><FaBluetoothB size={12} /></Bluetooth></Cell>
        <Cell $w={24} $center><Lang>EN</Lang></Cell>
        {["screen", "sound", "bulb", "wifi", "power"].map((k) => <Cell key={k} $w={24} $center><Tray kind={k} /></Cell>)}
        <Clock>Tue Nov 10,  1:32 PM</Clock>
      </Panel>

      <TitleBar>
        <Lights><Light $c="#f5515b" /><Light $c="#fdc92f" /><Light $c="#35f048" /></Lights>
        <TitleText>ClayNet™ | Home - Mozilla Firefox</TitleText>
      </TitleBar>

      <TabStrip>
        <Tab $w={225} $right={10}><Favicon /><TabLabel>ClayNet™ | Home</TabLabel><X size={16} strokeWidth={2.6} /></Tab>
        <Tab $w={224} $active><Favicon /><TabLabel>ClayNet™ | Home</TabLabel><X size={16} strokeWidth={2.6} /></Tab>
        <Tab $w={225} $left={10}><Sheets /><TabLabel $fade>Claynet ordering - Google Sheets</TabLabel><X size={16} strokeWidth={2.6} /></Tab>
        <NewTab><Plus size={20} strokeWidth={2.3} /></NewTab>
      </TabStrip>

      <NavBar>
        <NavButtons>
          <ArrowLeft size={20} strokeWidth={2.4} />
          <ArrowRight size={20} strokeWidth={2.4} color="#6c6c6e" />
          <Reload /><House />
        </NavButtons>
        <UrlBar>
          <Shield /><UrlDivider /><Lock /><Permissions />
          <UrlText>1.6.181.7<span>:9000/dashboard/Eos8mD74njJdaEmSm</span></UrlText>
          <UrlActions><Dots /><Pocket /><Star size={17} strokeWidth={2.6} /></UrlActions>
        </UrlBar>
        <Extensions>
          {["library", "sidebar", "account", "fox", "green", "tee", "badger"].map((k) => <Extension key={k}><Ext kind={k} /></Extension>)}
          <Extension><Ext kind="box" /><ExtBadge>L/F</ExtBadge></Extension>
          <Extension><SearchExt>S</SearchExt></Extension>
          <Extension><Ext kind="capsule" /></Extension>
          <Extension><MenuIcon size={17} strokeWidth={2.6} /></Extension>
        </Extensions>
      </NavBar>

      <Viewport>
        <Page>
          <AppBar>
            <Brand><NivettiLogo /></Brand>
            <HomeLink>Home</HomeLink>
            <AppActions><MdAccountCircle size={22} /><FaQuestionCircle size={18} /><FaExpandArrowsAlt size={19} /></AppActions>
          </AppBar>
          <Card>
            <Heading>
              <Title>PES1201800410-ipv6</Title>
              <Status>DEPLOYED</Status>
              <Meta>CREATED BY: USER24 · CREATION TIME: 09-11-2020 06:02 PM · DEPLOYED TIME: 10-11-2020 07:26 AM · UNDEPLOYED TIME: NEVER</Meta>
            </Heading>
            <Toolbar>
              <Group>
                <ToolButton $w={55} $tone="plain" $shift={1}><Page12 />New</ToolButton>
                <ToolButton $w={60} $tone="muted" $gap={3} $shift={2}><FaSave size={13} />Save</ToolButton>
                <ToolButton $w={82} $tone="muted"><FaRegEdit size={14} />Rename</ToolButton>
                <ToolButton $w={62} $tone="plain" $gap={3}><FaFolderOpen size={14} />Load</ToolButton>
                <ToolButton $w={69} $tone="plain" $shift={1}><Transfer />Import</ToolButton>
                <ToolButton $w={69} $tone="muted" $gap={3} $shift={2}><Transfer up />Export</ToolButton>
                <ToolButton $w={67} $tone="danger" $shift={1}><FaTrashAlt size={12} />Delete</ToolButton>
              </Group>
              <Group>
                <ToolButton $w={130} $tone="muted"><FaLink size={12} />Connection mgmt</ToolButton>
                <ToolButton $w={32} $tone="muted"><External /></ToolButton>
              </Group>
              <Group>
                <ToolButton $w={72} $tone="muted" $shift={1}><FaPlayCircle size={12} />Deploy</ToolButton>
                <ToolButton $w={85} $tone="stop" $gap={3} $shift={1}><FaStopCircle size={12} />Undeploy</ToolButton>
              </Group>
              <Group><ToolButton $w={30} $tone="gear"><FaCog size={12} /></ToolButton></Group>
            </Toolbar>
            <Work>
              <Palette>
                <PaletteHead $h={27} $up={2}>Network</PaletteHead>
                <PaletteItem $h={34} $line $up={1} $left={0}><Router w={37} /></PaletteItem>
                <PaletteItem $h={44} $line $down={3}><Switch /></PaletteItem>
                <PaletteItem $h={49} $line><Wifi /></PaletteItem>
                <PaletteItem $h={33}><Ethernet /></PaletteItem>
                <PaletteHead $h={28} $down={1}>Compute</PaletteHead>
                <PaletteItem $h={49} $line $down={2}><Server /></PaletteItem>
                <PaletteItem $h={44} $line><Computer w={35} /></PaletteItem>
                <PaletteItem $h={38}><Phone /></PaletteItem>
                <PaletteHead $h={29}>Security</PaletteHead>
                <PaletteItem $h={43}><Firewall /></PaletteItem>
                <PaletteHead $h={28} $down={1}>Utility</PaletteHead>
                <PaletteItem $h={43}><TextTool /></PaletteItem>
              </Palette>
              <Canvas>
                <Links width="1353" height="505" viewBox="177 368 1353 505">
                  <path d="M343 630L533 548.3M591 536.2L773 538.4M831 556.5L979 650" stroke="#408c4a" strokeWidth="3" fill="none" />
                </Links>
                <Port $x={356} $y={172}>1</Port><Port $x={406.5} $y={162}>2</Port>
                <Port $x={158} $y={257}>1</Port><Port $x={596.5} $y={164}>2</Port>
                <Port $x={647} $y={180}>1</Port><Port $x={802} $y={278}>1</Port>
                <Node $x={362} $y={153.5}><Router w={46} /></Node>
                <Node $x={602} $y={156.5}><Router w={46} /></Node>
                <Node $x={127} $y={260}><Computer w={35} /></Node>
                <Node $x={808} $y={284}><Computer w={35} /></Node>
                <NodeName $x={367.5} $y={139}>Router1</NodeName>
                <NodeName $x={608} $y={142}>Router2</NodeName>
                <NodeName $x={125} $y={250}>Alice</NodeName>
                <NodeName $x={805.5} $y={274}>Bob</NodeName>
                <Node $x={636} $y={79}>
                  <svg width="16" height="22" viewBox="-2 -1 16 22">
                    <path d="M0 0L11 11.5L7.5 12.5L9 17L6.5 18L4 14.5L0 16.5Z" fill="#474747" stroke="#ececec" strokeWidth="2" paintOrder="stroke" />
                  </svg>
                </Node>
              </Canvas>
            </Work>
          </Card>
        </Page>
        <Scrollbar><Thumb /></Scrollbar>
      </Viewport>

      <TaskBar>
        <Task $w={96} $pad={10} $menu $track={-0.7}><MenuDots /><TaskLabel>Menu</TaskLabel></Task>
        <Task $w={194} $pad={1}><Chrome /><TaskLabel>Cloud Shell - Google Ch...</TaskLabel></Task>
        <Task $w={198} $pad={5} $active $track={-0.38}><Firefox size={15} /><TaskLabel>ClayNet™ | Home - Mo...</TaskLabel></Task>
        <Task $w={200} $pad={5} $track={-0.13}><Terminal size={15} /><TaskLabel>Parrot Terminal</TaskLabel></Task>
        <Push><Pager /></Push>
      </TaskBar>
    </Desktop>
  );
}
